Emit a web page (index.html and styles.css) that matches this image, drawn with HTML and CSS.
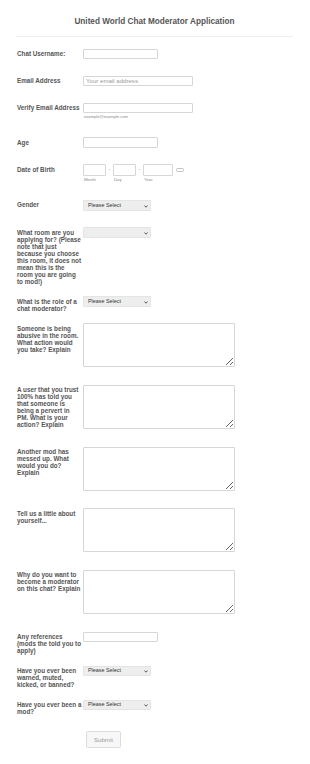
FILE: index.html
```html
<!DOCTYPE html>
<html>
<head>
<meta charset="utf-8">
<title>United World Chat Moderator Application</title>
<link rel="stylesheet" href="styles.css">
</head>
<body>
<form class="form">
  <div class="header"><h1 class="title">United World Chat Moderator Application</h1></div>
  <ul class="list">
    <li class="row">
      <label class="label">Chat Username:</label>
      <div class="field"><input class="text w75" type="text"></div>
    </li>
    <li class="row">
      <label class="label">Email Address</label>
      <div class="field"><input class="text w110" type="text" placeholder="Your email address"></div>
    </li>
    <li class="row">
      <label class="label">Verify Email Address</label>
      <div class="field field-sub"><input class="text w110 flush" type="text"><span class="sublabel sub-email">example@example.com</span></div>
    </li>
    <li class="row">
      <label class="label">Age</label>
      <div class="field"><input class="text w75" type="text"></div>
    </li>
    <li class="row">
      <label class="label">Date of Birth</label>
      <div class="field field-date">
        <div class="date-part"><input class="text date w23" type="text"><span class="sublabel">Month</span></div>
        <span class="dash">-</span>
        <div class="date-part"><input class="text date w23" type="text"><span class="sublabel">Day</span></div>
        <span class="dash">-</span>
        <div class="date-part"><input class="text date w30" type="text"><span class="sublabel">Year</span></div>
        <svg class="cal" width="8" height="4" viewBox="0 0 8 4"><rect x="0.5" y="0.5" width="7" height="3" rx="1" fill="none" stroke="#b5b5b5" stroke-width="0.8"/></svg>
      </div>
    </li>
    <li class="row">
      <label class="label">Gender</label>
      <div class="field"><div class="select"><span class="select-text">Please Select</span><svg class="chev" width="4" height="3" viewBox="0 0 4 3"><path d="M0.4 0.5 L2 2.2 L3.6 0.5" fill="none" stroke="#444" stroke-width="0.9"/></svg></div></div>
    </li>
    <li class="row">
      <label class="label">What room are you applying for? (Please note that just because you choose this room, it does not mean this is the room you are going to mod!)</label>
      <div class="field"><div class="select"><span class="select-text"></span><svg class="chev" width="4" height="3" viewBox="0 0 4 3"><path d="M0.4 0.5 L2 2.2 L3.6 0.5" fill="none" stroke="#444" stroke-width="0.9"/></svg></div></div>
    </li>
    <li class="row">
      <label class="label">What is the role of a chat moderator?</label>
      <div class="field"><div class="select"><span class="select-text">Please Select</span><svg class="chev" width="4" height="3" viewBox="0 0 4 3"><path d="M0.4 0.5 L2 2.2 L3.6 0.5" fill="none" stroke="#444" stroke-width="0.9"/></svg></div></div>
    </li>
    <li class="row">
      <label class="label">Someone is being abusive in the room. What action would you take? Explain</label>
      <div class="field"><textarea class="area"></textarea></div>
    </li>
    <li class="row">
      <label class="label">A user that you trust 100% has told you that someone is being a pervert in PM. What is your action? Explain</label>
      <div class="field"><textarea class="area"></textarea></div>
    </li>
    <li class="row">
      <label class="label">Another mod has messed up. What would you do? Explain</label>
      <div class="field"><textarea class="area"></textarea></div>
    </li>
    <li class="row">
      <label class="label">Tell us a little about yourself...</label>
      <div class="field"><textarea class="area"></textarea></div>
    </li>
    <li class="row">
      <label class="label">Why do you want to become a moderator on this chat? Explain</label>
      <div class="field"><textarea class="area"></textarea></div>
    </li>
    <li class="row">
      <label class="label">Any references (mods the told you to apply)</label>
      <div class="field"><input class="text w75" type="text"></div>
    </li>
    <li class="row">
      <label class="label">Have you ever been warned, muted, kicked, or banned?</label>
      <div class="field"><div class="select"><span class="select-text">Please Select</span><svg class="chev" width="4" height="3" viewBox="0 0 4 3"><path d="M0.4 0.5 L2 2.2 L3.6 0.5" fill="none" stroke="#444" stroke-width="0.9"/></svg></div></div>
    </li>
    <li class="row">
      <label class="label">Have you ever been a mod?</label>
      <div class="field"><div class="select"><span class="select-text">Please Select</span><svg class="chev" width="4" height="3" viewBox="0 0 4 3"><path d="M0.4 0.5 L2 2.2 L3.6 0.5" fill="none" stroke="#444" stroke-width="0.9"/></svg></div></div>
    </li>
    <li class="submit-row">
      <button class="submit" type="button">Submit</button>
    </li>
  </ul>
</form>
</body>
</html>
```
FILE: styles.css
```css
* { box-sizing: border-box; }
html, body { margin: 0; padding: 0; background: #fff; }
body { font-family: "Liberation Sans", Arial, sans-serif; color: #555; }

.form { padding: 0 17px 0 16px; }

.header {
  padding: 16.5px 0 9.5px;
  border-bottom: 1px solid #eeeeee;
}
.title {
  margin: 0;
  font-size: 8.2px;
  line-height: 10px;
  font-weight: bold;
  text-align: center;
  color: #555;
}

.list { list-style: none; margin: 0; padding: 6px 0 0; }

.row {
  display: flex;
  align-items: flex-start;
  padding: 5.5px 0 5.5px 1px;
}
.label {
  flex: 0 0 66px;
  width: 66px;
  font-size: 6.3px;
  line-height: 7px;
  font-weight: bold;
  color: #555;
  padding: 1.5px 1.3px 0.5px 0;
}
.field { display: flex; flex-direction: column; align-items: flex-start; }

.text {
  display: block;
  height: 10.5px;
  margin: 0 0 5.5px;
  padding: 0 0 0 2px;
  border: 0.8px solid #d6d6d6;
  border-radius: 1px;
  background: #fff;
  font-family: "Liberation Sans", Arial, sans-serif;
  font-size: 6.1px;
  color: #555;
  outline: none;
}
.text::placeholder { color: #9a9a9a; }
.w75 { width: 75px; }
.w110 { width: 110px; }
.flush { margin-bottom: 0; }

.sublabel {
  display: block;
  font-size: 4.3px;
  line-height: 6px;
  color: #8a8a8a;
  margin-top: 1.3px;
  padding-left: 1px;
}
.sub-email { margin-bottom: 6px; font-size: 4.1px; }

.field-date { flex-direction: row; align-items: flex-start; }
.date-part { display: flex; flex-direction: column; margin-bottom: 6px; }
.date { height: 11.4px; margin: 0; }
.w23 { width: 23px; }
.w30 { width: 29.7px; }
.dash {
  width: 7px;
  text-align: center;
  font-size: 6px;
  line-height: 11.4px;
  color: #999;
}
.cal { margin: 3.8px 0 0 3.3px; display: block; }

.select {
  position: relative;
  width: 68px;
  height: 10.6px;
  margin-bottom: 5.5px;
  background: #eeeeee;
  border: 0.6px solid #e4e4e4;
  border-radius: 1px;
  display: flex;
  align-items: center;
  padding-left: 4px;
}
.select-text {
  font-size: 5.4px;
  line-height: 7px;
  color: #333;
}
.chev { position: absolute; right: 2.5px; top: 3.8px; display: block; }

.area {
  display: block;
  width: 152px;
  height: 44px;
  margin: 0 0 6.7px;
  border: 0.8px solid #d6d6d6;
  border-radius: 1px;
  background: #fff;
  resize: vertical;
  font-family: "Liberation Sans", Arial, sans-serif;
  font-size: 6px;
  outline: none;
}

.submit-row { padding: 10px 0 0 70px; }
.submit {
  display: block;
  width: 35px;
  height: 17px;
  padding: 0;
  background: #f7f7f7;
  border: 0.8px solid #dcdcdc;
  border-radius: 1.5px;
  font-family: "Liberation Sans", Arial, sans-serif;
  font-size: 6.1px;
  color: #9a9a9a;
}
```
